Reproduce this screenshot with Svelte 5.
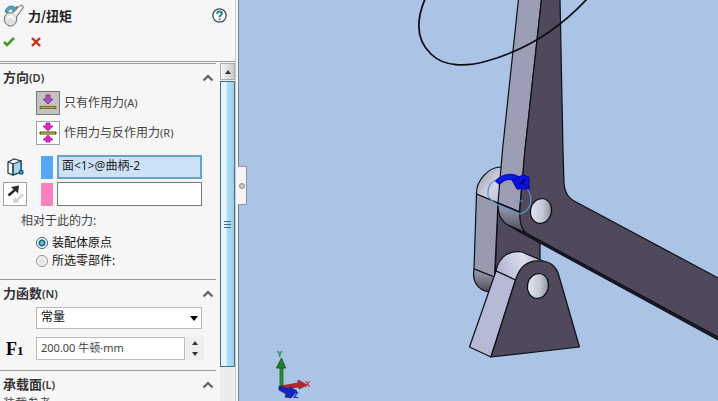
<script>
  let mode = $state('action');
  let relative = $state('origin');
  let fn = $state('constant');
  let face = $state('面<1>@曲柄-2');
  let second = $state('');
  let value = $state('200.00 牛顿·mm');
</script>

{#snippet chevron()}
  <svg width="12" height="8" viewBox="0 0 12 8"><path d="M1.500 6.500 6 2l4.500 4.500" fill="none" stroke="#5c5c5c" stroke-width="2" /></svg>
{/snippet}

<div class="app">
  <aside>
    <header>
      <div class="title">
        <svg width="22" height="24" viewBox="0 0 22 24">
          <path d="M2 8C3 2 9 0 13 4l1-2 1 6-6-1 2-1C8 4 5 5 5 9Z" fill="#4da3c5" stroke="#2e7187" stroke-width=".7" />
          <path d="M1.500 13c1-3 4-5 8-4l7-7c2-2 5 0 3 3l-6 8c1 5-2 9-6 9-4 0-7-4-6-9Z" fill="#e2e2e2" stroke="#666" stroke-width="1" />
          <path d="m12 10 6-7M4 14l4-2 4 4" fill="none" stroke="#fff" stroke-width="1.500" />
        </svg>
        <h1>力/扭矩</h1>
        <button class="plain help" aria-label="帮助">
          <svg width="15" height="15" viewBox="0 0 14 14"><circle cx="7" cy="7" r="6.200" fill="#fff" stroke="#444b55" stroke-width="1.200" /><path d="M4.800 5.300C4.800 2.500 9.300 2.500 9.200 5.100 9.200 6.600 7 6.600 7 8.700M7 9.900v1.500" fill="none" stroke="#287f91" stroke-width="1.900" /></svg>
        </button>
      </div>
      <div class="actions">
        <button class="plain" aria-label="确定"><svg width="12" height="10" viewBox="0 0 12 10"><path d="m1 5 3 3 7-7" fill="none" stroke="#3f9f24" stroke-width="2.600" /></svg></button>
        <button class="plain" aria-label="取消"><svg width="10" height="10" viewBox="0 0 10 10"><path d="m1 1 8 8M9 1 1 9" fill="none" stroke="#c72d14" stroke-width="2.400" /></svg></button>
      </div>
    </header>
    <div class="body">
      <div class="sections">
        <section class="direction">
          <h2><span>方向<small>(D)</small></span>{@render chevron()}</h2>
          <div class="modes">
            <div class="mode">
              <button id="action" class="tool" class:pressed={mode === 'action'} onclick={() => (mode = 'action')}>
                <svg width="22" height="22" viewBox="0 0 22 22"><path d="M9 3h4v4h3l-5 5-5-5h3Z" fill="#b14fc4" stroke="#713080" stroke-width=".8" /><path d="M3 14.500h16v2H3z" fill="#c4b42e" stroke="#494315" stroke-width=".7" /></svg>
              </button>
              <label for="action">只有作用力<small>(A)</small></label>
            </div>
            <div class="mode">
              <button id="reaction" class="tool" class:pressed={mode === 'reaction'} onclick={() => (mode = 'reaction')}>
                <svg width="22" height="22" viewBox="0 0 22 22"><path d="M9 1h4v3h3l-5 5-5-5h3ZM9 20h4v-2h3l-5-5-5 5h3Z" fill="#ed20dc" stroke="#8a167e" stroke-width=".7" /><path d="M3 10h16v2H3z" fill="#fff33a" stroke="#222" stroke-width=".9" /></svg>
              </button>
              <label for="reaction">作用力与反作用力<small>(R)</small></label>
            </div>
          </div>
          <div class="pick">
            <svg class="cube" width="18" height="18" viewBox="0 0 18 18"><path d="m2 4 6-3 7 2v11l-8 3-5-2Z" fill="#fff" stroke="#264252" stroke-width="1.300" /><path d="m7 6 8-3v11l-8 3Z" fill="#a5d7ef" stroke="#264252" stroke-width="1.200" /><path d="m2 4 5 2v11" fill="none" stroke="#264252" stroke-width="1.200" /><path d="M13.500 12.500h3.500V16h-3.500z" fill="#2e9fca" stroke="#174c64" /></svg>
            <i class="bar blue"></i>
            <input class="active" aria-label="力的方向" bind:value={face} />
          </div>
          <div class="pick">
            <button class="tool" aria-label="反向">
              <svg width="22" height="22" viewBox="0 0 22 22"><path d="m3.500 11.500 6-5L7 4l8-1.500-1 8-2.500-2.500-6 5.500Z" fill="#2b2b2b" /><path d="m18.500 10.500-6 5.500-2.500-2-1 6 7-1-2-1.500 6-5.500Z" fill="#d0d0d0" /></svg>
            </button>
            <i class="bar pink"></i>
            <input aria-label="第二参考" bind:value={second} />
          </div>
          <p>相对于此的力:</p>
          <label class="radio"><input type="radio" name="rel" value="origin" bind:group={relative} />装配体原点</label>
          <label class="radio"><input type="radio" name="rel" value="part" bind:group={relative} />所选零部件:</label>
        </section>
        <section class="function">
          <h2><span>力函数<small>(N)</small></span>{@render chevron()}</h2>
          <div class="selectbox">
            <select aria-label="力函数" bind:value={fn}><option value="constant">常量</option></select>
            <svg width="8" height="5" viewBox="0 0 8 5"><path d="M0 0h8L4 5Z" /></svg>
          </div>
          <div class="amount">
            <label for="f1">F<sub>1</sub></label>
            <input id="f1" bind:value />
            <div class="spin">
              <button class="plain" aria-label="增加"><svg width="6" height="4" viewBox="0 0 6 4"><path d="M0 4h6L3 0Z" fill="#333" /></svg></button>
              <button class="plain" aria-label="减少"><svg width="6" height="4" viewBox="0 0 6 4"><path d="M0 0h6L3 4Z" fill="#333" /></svg></button>
            </div>
          </div>
        </section>
        <section class="bearing">
          <h2><span>承载面<small>(L)</small></span>{@render chevron()}</h2>
          <div class="hint">装载参考</div>
        </section>
      </div>
      <div class="scroll">
        <button class="up" aria-label="向上滚动"><svg width="6" height="4" viewBox="0 0 6 4"><path d="M0 4h6L3 0Z" fill="#333" /></svg></button>
        <div class="thumb"><i></i><i></i><i></i></div>
      </div>
    </div>
  </aside>

  <main>
    <button class="handle" aria-label="收起面板"><span></span></button>
    <svg class="scene" viewBox="239 0 479 401" preserveAspectRatio="xMinYMin slice">
      <defs>
        <linearGradient id="cap" x1="0" y1="0" x2="1" y2="1"><stop offset="0" stop-color="#9294a3" /><stop offset=".5" stop-color="#d3d5e7" /><stop offset="1" stop-color="#aeb1c8" /></linearGradient>
        <linearGradient id="turn" x1="0" y1="0" x2="0" y2="1"><stop offset="0" stop-color="#a0a2b8" /><stop offset="1" stop-color="#4c4c57" /></linearGradient>
        <linearGradient id="hole" x1="0" y1=".2" x2="1" y2="0"><stop offset="0" stop-color="#dfe1ef" /><stop offset=".5" stop-color="#c5c7d6" /><stop offset="1" stop-color="#85858f" /></linearGradient>
        <linearGradient id="top" x1="0" y1=".2" x2="1" y2="0"><stop offset="0" stop-color="#b5b8d2" /><stop offset=".55" stop-color="#dcdeee" /><stop offset="1" stop-color="#a9abc0" /></linearGradient>
      </defs>
      <g stroke="#0b0f18" stroke-width="1.200" stroke-linejoin="round">
        <path d="M498 203 495 280 505 290 540 262V235L520 215Z" fill="#50495c" />
        <path d="M476.500 194C476 181 488 167 501 167L510 180V207L498 203Z" fill="url(#cap)" />
        <path d="M476.500 194 498 203 494.500 277 474 269Z" fill="#989aae" />
        <path d="M474 269C472 281 477 290 489 292L494.500 277Z" fill="url(#turn)" />
        <path d="M507 224 523 231 720 338V341L518 231Z" fill="#20202a" />
        <path d="M518.500-1 541.500-1 525 150 519.500 212 498 203 502.500 150Z" fill="#9c9eb5" />
        <path d="M498 203C498 215 501 221 508 225L526 233C520 228 519 219 519.500 212Z" fill="url(#turn)" stroke="none" />
        <path d="M498 203C498 215 501 221 508 225L526 233" fill="none" />
        <path d="M541.500-1H560L563 150 564 183C565 193 568 198 576 202L720 279V338L526 233C520 228 519 219 520 207L525 150Z" fill="#50495c" />
        <ellipse cx="541" cy="211" rx="10.500" ry="12.500" transform="rotate(12 541 211)" fill="url(#hole)" />
        <path d="M496 271C499 256 510 250 522 252L543 261 515.500 280Z" fill="url(#top)" />
        <path d="M496 271 515.500 280 491 357 469.500 347Z" fill="#b6b9d5" />
        <path d="M491 357 515.500 280C520 265 530 260 541 261 551 261 557 268 559 276L579.500 347Z" fill="#50495c" />
        <ellipse cx="538" cy="286" rx="10.500" ry="12.500" transform="rotate(12 538 286)" fill="url(#hole)" />
        <path d="m498 203 21.500 9" stroke-width="1.600" />
      </g>
      <path d="M425-1C415 23 417 41 431 54 444 67 466 67 487 61 530 49 561 27 587-1" fill="none" stroke="#080b12" stroke-width="1.700" />
      <path d="M488 196C487 185 492 180 499 180M488 196C492 203 510 213 520 214 531 211 534 198 527 189M515 201h8" fill="none" stroke="#6095c7" stroke-width="1.200" />
      <path d="M497 183C503 177 510 175 518 179" fill="none" stroke="#050da8" stroke-width="6" />
      <path d="M497 182C503 177 510 175 519 179" fill="none" stroke="#1018e6" stroke-width="4" />
      <path d="m512 180 11-5 6 2v8l1 3-2 1h-11Z" fill="#0b12e2" stroke="#0606a0" />
      <path d="m519 185 3-5 4-1-3 5Z" fill="#050568" />
      <g class="triad">
        <path d="M279.500 367h4v21h-4z" fill="#258333" /><path d="m276.500 368 5-10 4 10Z" fill="#21822e" stroke="#17541f" />
        <path d="m281 386 17-3v-3l9 5-8 4v-2l-18 2Z" fill="#bf2329" stroke="#701f28" stroke-width=".7" />
        <path d="m279 386 10 3 1-2 7 4-6 7-6-1 1-3-7-4Z" fill="#1524bd" stroke="#101b7c" stroke-width=".7" />
        <text x="277" y="357">Y</text>
        <text class="x" x="305" y="387">X</text>
        <text class="z" x="293" y="398">Z</text>
      </g>
    </svg>
  </main>
</div>

<style>
  :global(body) { margin: 0; }
  * { box-sizing: border-box; }
  svg { display: block; flex: none; }
  .app { display: flex; height: 100vh; overflow: hidden; background: #abc3e5; color: #333; font: 12px/18px "Noto Sans", "Noto Sans CJK SC", sans-serif; }
  aside { width: 239px; flex: none; display: flex; flex-direction: column; background: #f6f6f6; border-right: 1px solid #72808f; padding-right: 2px; }
  header { height: 62px; flex: none; border-bottom: 1px solid #999aa2; border-right: 1px solid #ccc; }
  .title { display: flex; align-items: center; height: 31px; padding: 0 8px 0 3px; gap: 3px; }
  h1 { margin: 0; flex: 1; font-size: 13px; line-height: 20px; font-weight: 600; color: #222; font-family: "Noto Sans CJK SC", sans-serif; }
  .actions { display: flex; align-items: center; gap: 16px; height: 22px; padding-left: 3px; }
  button { font: inherit; cursor: pointer; }
  .plain { border: 0; background: none; padding: 0; }
  .body { display: flex; flex: 1; min-height: 0; border-right: 1px solid #ccc; padding-top: 1px; }
  .sections { flex: 1; min-width: 0; overflow: hidden; }
  section { border-top: 1px solid #999aa2; padding-left: 3px; }
  .direction { height: 216px; }
  .function { height: 91px; }
  h2 { margin: 0; display: flex; align-items: center; justify-content: space-between; height: 27px; padding-right: 2px; font-size: 13px; font-weight: 600; }
  small { font-size: 11px; }
  .modes { padding-left: 33px; display: flex; flex-direction: column; gap: 6px; margin-bottom: 10px; }
  .mode { display: flex; align-items: center; gap: 4px; }
  .mode label { color: #444; }
  .tool { width: 24px; height: 24px; padding: 0; border: 1px solid #a3a3a3; background: #fff; }
  .tool.pressed { background: #c3c2c1; border-color: #777; }
  .pick { display: flex; align-items: center; height: 24px; margin: 0 14px 3px 0; }
  .cube { margin: 0 3px; }
  .bar { width: 12px; height: 23px; margin: 0 4px 0 14px; flex: none; }
  .blue { background: #56a8f7; }
  .pink { background: #f981bd; }
  .pick input, .amount input { min-width: 0; flex: 1; height: 24px; padding: 0 4px; border: 1px solid #77777f; background: #fff; font: inherit; color: #222; outline: 0; }
  .pick .active { border: 2px solid #62a4ca; background: #cee2f7; padding: 0 3px 4px; }
  .pick + .pick { margin-bottom: 6px; }
  p { margin: 0 0 4px; padding-left: 18px; line-height: 18px; color: #444; }
  .radio { display: flex; align-items: center; gap: 4px; height: 18px; padding-left: 33px; color: #111; }
  .radio input { appearance: none; width: 12px; height: 12px; margin: 0; border: 1px solid #929292; border-radius: 50%; background: radial-gradient(#ddd, #fff); }
  .radio input:checked { border-color: #315f82; background: radial-gradient(circle, #74c6e7 0 1px, #155173 3px, #fff 4px); }
  .selectbox { display: grid; align-items: center; margin: 0 14px 8px 33px; }
  .selectbox > * { grid-area: 1 / 1; }
  .selectbox svg { justify-self: end; margin-right: 4px; pointer-events: none; }
  select { appearance: none; width: 100%; height: 22px; padding: 0 4px 2px; border: 1px solid #b8b8b8; border-radius: 0; background: #fff; font: inherit; color: #111; }
  .amount { display: flex; align-items: center; margin-right: 12px; }
  .amount label { width: 33px; padding-left: 3px; font: bold 18px/22px "Liberation Serif", serif; color: #000; }
  sub { font-size: 13px; line-height: 0; vertical-align: baseline; }
  .amount input { height: 23px; padding-bottom: 4px; border-color: #bbb; font-size: 11px; color: #444; }
  .spin { width: 18px; height: 23px; margin-left: 1px; display: flex; flex-direction: column; background: #eee; }
  .spin button { flex: 1; display: grid; place-items: center; }
  .hint { line-height: 12px; color: #444; }
  .scroll { width: 15px; margin-left: 4px; background: #ececec; display: flex; flex-direction: column; gap: 1px; }
  .up { height: 17px; flex: none; border: 1px solid #aaa; padding: 0; display: grid; place-items: center; background: linear-gradient(90deg, #f5f5f5, #ccc); }
  .thumb { height: 89%; flex: 0 0 auto; max-height: calc(100% - 52px); border: 1px solid #436f8b; background: linear-gradient(90deg, #e8f7fd 0 35%, #b0dcf4 50%, #9bd0ee); display: flex; flex-direction: column; justify-content: center; align-items: center; gap: 2px; }
  .thumb i { width: 7px; height: 1px; background: #356f8d; }
  main { flex: 1; min-width: 0; position: relative; }
  .scene { position: absolute; inset: 0; width: 100%; height: 100%; }
  .handle { position: absolute; z-index: 1; left: -1px; top: 166px; width: 9px; height: 39px; padding: 0; border: 1px solid #8b94a0; border-left: 0; background: #f6f6f6; display: grid; place-items: center; }
  .handle span { width: 6px; height: 6px; border: 1px solid #888; border-radius: 50%; background: #ccc; }
  .triad text { font: bold 9px "Liberation Mono", monospace; fill: #248646; }
  .triad .x { fill: #d32c4c; }
  .triad .z { fill: #1724ce; }
</style>
